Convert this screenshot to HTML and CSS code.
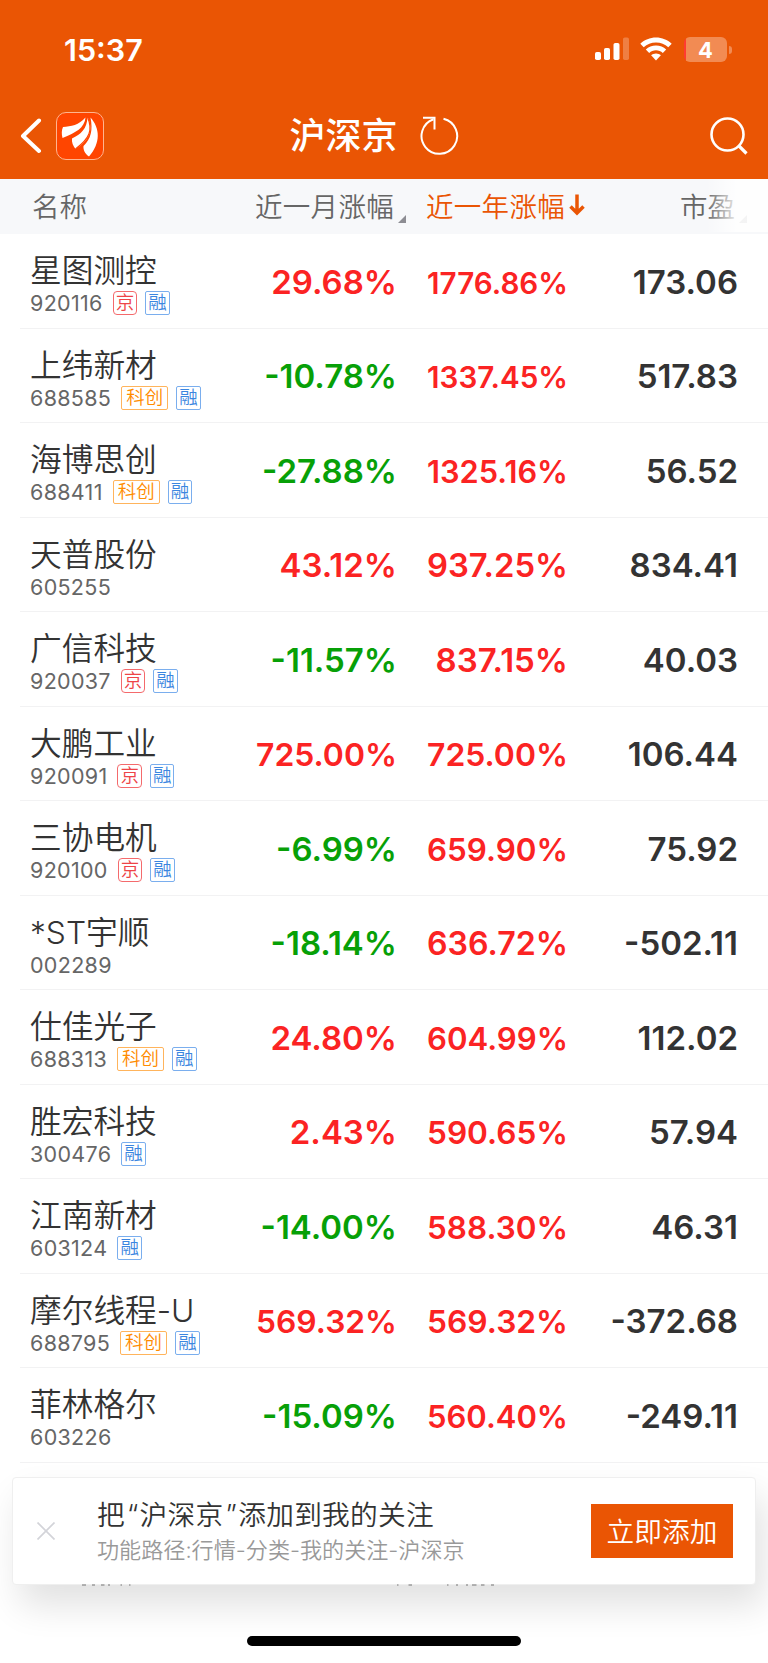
FILE: index.html
```html
<!DOCTYPE html>
<html lang="zh-CN">
<head>
  <meta charset="UTF-8" />
  <meta name="viewport" content="width=device-width, initial-scale=1.0"/>
  <title>沪深京</title>
  <link rel="stylesheet" href="styles.css">
</head>
<body>
  <header>
    <div class="status-bar">
      <span class="time">15:37</span>
      <div class="status-icons">
        <svg class="signal" width="34" height="24" viewBox="0 0 34 24" fill="#fff">
          <rect x="0" y="15" width="6" height="8" rx="1.8"/>
          <rect x="9" y="11" width="6" height="12" rx="1.8"/>
          <rect x="18.5" y="6" width="6" height="17" rx="1.8"/>
          <rect x="28" y="0.5" width="6" height="22.5" rx="1.8" opacity="0.25"/>
        </svg>
        <svg class="wifi" width="32" height="24" viewBox="0 0 32 24" fill="#fff">
          <path d="M16 0.5C22 0.5 27.500 2.800 31.700 6.700L28.300 10.300C25 7.200 20.700 5.400 16 5.400S7 7.200 3.700 10.300L0.300 6.700C4.500 2.800 10 0.500 16 0.500Z"/>
          <path d="M16 8.500C20 8.500 23.500 10 26.200 12.400L22.800 15.900C21 14.300 18.600 13.300 16 13.300S11 14.300 9.200 15.900L5.800 12.400C8.500 10 12 8.500 16 8.500Z"/>
          <path d="M16 16.500C17.900 16.500 19.600 17.200 20.900 18.300L16 23.500L11.100 18.300C12.400 17.200 14.100 16.500 16 16.500Z"/>
        </svg>
        <div class="battery"><span>4</span></div>
      </div>
    </div>
    <nav>
      <div class="nav-left">
        <svg width="22" height="36" viewBox="0 0 22 36" fill="none" stroke="#fff" stroke-width="4" stroke-linecap="round" stroke-linejoin="round">
          <path d="M19 2.500L3 18L19 33"/>
        </svg>
        <svg class="logo" width="48" height="48" viewBox="0 0 48 48">
          <rect x="0.500" y="0.500" width="47" height="47" rx="9.500" fill="#ff4500" stroke="#ffb48f"/>
          <g fill="#fff">
            <path d="M6.500 26C5.500 22 5.500 18 7 15C15 14.500 23 13 29.500 5.500C28.500 16 20 20.500 6.500 26Z"/>
            <path d="M19.500 37C17 34 15.500 30 16 26.500C25 22 31 17 31.500 5C39 19 31 30 19.500 37Z"/>
            <path d="M33 44.500C29 42 27 37.500 27.500 34C35 27 37 18 34.500 5.500C44 16 45 31 33 44.500Z"/>
            <path d="M31.500 5C37 18 34 26 19.500 37" fill="none" stroke="#ff4500" stroke-width="1.200"/>
          </g>
        </svg>
      </div>
      <div class="nav-title">
        <h1>沪深京</h1>
        <svg width="40" height="40" viewBox="0 0 40 40" fill="none" stroke="#fff" stroke-width="2">
          <path d="M24.500 2.700A17.800 17.800 0 1 1 14.500 3.200"/>
          <path d="M4 1.800H15.500V13.500"/>
        </svg>
      </div>
      <svg class="search" width="38" height="38" viewBox="0 0 38 38" fill="none" stroke="#fff" stroke-width="2.600">
        <circle cx="17.500" cy="17.500" r="16"/>
        <path d="M28.500 28.500L36.500 36.500" stroke-width="3.200"/>
      </svg>
    </nav>
  </header>

  <div class="table-head">
    <span class="col-name">名称</span>
    <span class="col-month">近一月涨幅<i class="corner"></i></span>
    <span class="col-year active">近一年涨幅<svg width="16" height="22" viewBox="0 0 16 22" fill="none" stroke="#ea5504" stroke-width="3.500"><path d="M8 0.500V19M1.500 12.500L8 19L14.500 12.500"/></svg></span>
    <span class="col-pe">市盈<i class="corner"></i></span>
  </div>

  <main id="stockList"></main>

  <div class="banner">
    <svg class="close" width="18" height="18" viewBox="0 0 18 18" stroke="#d3d4d9" stroke-width="1.700">
      <path d="M0.500 0.500L17.500 17.500M17.500 0.500L0.500 17.500"/>
    </svg>
    <div class="banner-text">
      <p class="banner-title">把<q>“</q>沪深京<q>”</q>添加到我的关注</p>
      <p class="banner-path">功能路径:行情-分类-我的关注-沪深京</p>
    </div>
    <button type="button">立即添加</button>
  </div>
  <!-- bottom edge of the tab labels under the banner -->
  <svg class="tab-edge" width="420" height="2" viewBox="0 0 420 2" stroke="#777" stroke-width="1.200">
    <path d="M0 1h4M10 1h3M19 1h3.500M26 1h2M38.500 1h1.500M47 1h1.500M315 1h1.500M326.500 1h3.500M365 1h1.500M374 1h2M384 1h2M390 1h4.500M399 1h3.500M409 1h3"/>
  </svg>
  <div class="home-indicator"></div>

  <script>
    const stocks = [
      ['星图测控', '920116', ['京', '融'], '29.68', '1776.86', '173.06'],
      ['上纬新材', '688585', ['科创', '融'], '-10.78', '1337.45', '517.83'],
      ['海博思创', '688411', ['科创', '融'], '-27.88', '1325.16', '56.52'],
      ['天普股份', '605255', [], '43.12', '937.25', '834.41'],
      ['广信科技', '920037', ['京', '融'], '-11.57', '837.15', '40.03'],
      ['大鹏工业', '920091', ['京', '融'], '725.00', '725.00', '106.44'],
      ['三协电机', '920100', ['京', '融'], '-6.99', '659.90', '75.92'],
      ['*ST宇顺', '002289', [], '-18.14', '636.72', '-502.11'],
      ['仕佳光子', '688313', ['科创', '融'], '24.80', '604.99', '112.02'],
      ['胜宏科技', '300476', ['融'], '2.43', '590.65', '57.94'],
      ['江南新材', '603124', ['融'], '-14.00', '588.30', '46.31'],
      ['摩尔线程-U', '688795', ['科创', '融'], '569.32', '569.32', '-372.68'],
      ['菲林格尔', '603226', [], '-15.09', '560.40', '-249.11']
    ];
    const tagClass = { '京': 'tag-bj', '科创': 'tag-kc', '融': 'tag-rz' };
    const list = document.getElementById('stockList');

    function color(value) {
      return value.startsWith('-') ? 'down' : 'up';
    }

    stocks.forEach(([name, code, tags, month, year, pe]) => {
      const row = document.createElement('div');
      row.className = 'row';
      row.innerHTML = `
        <div class="stock">
          <div class="stock-name">${name}</div>
          <div class="stock-code"><span>${code}</span>${tags.map(t => `<em class="tag ${tagClass[t]}">${t}</em>`).join('')}</div>
        </div>
        <span class="num month ${color(month)}"><b>${month}%</b></span>
        <span class="num year ${color(year)}"><b>${year}%</b></span>
        <span class="num pe">${pe}</span>`;
      list.appendChild(row);
    });

    // shrink long values so they stay inside the column
    document.querySelectorAll('.num b').forEach(el => {
      const width = el.getBoundingClientRect().width;
      if (width > 141) el.style.fontSize = (33 * 141 / width) + 'px';
    });
  </script>
</body>
</html>
```
FILE: styles.css
```css
* {
  box-sizing: border-box;
}

body {
  margin: 0;
  height: 1663px;
  overflow: hidden;
  position: relative;
  background: #fff;
  color: #333;
  font-family: Inter, "Noto Sans CJK SC", sans-serif;
}

header {
  height: 179px;
  background: #ea5504;
  color: #fff;
}

.status-bar {
  display: flex;
  justify-content: space-between;
  align-items: center;
  height: 98px;
  padding: 0 35px 0 64px;
}

.time {
  font-size: 30.5px;
  font-weight: 600;
}

.status-icons {
  display: flex;
  align-items: center;
}

.wifi {
  margin: 0 12px 0 11px;
}

.battery {
  position: relative;
  width: 43px;
  height: 25px;
  margin-right: 6px;
  border-radius: 6px;
  background: linear-gradient(to right, #ff3b30 2px, #f28b53 2px);
  font-size: 22px;
  font-weight: 700;
  line-height: 26px;
  text-align: center;
}

.battery::after {
  content: "";
  position: absolute;
  left: 45px;
  top: 9px;
  width: 3px;
  height: 8px;
  border-radius: 0 3px 3px 0;
  background: #f28b53;
}

nav {
  display: grid;
  grid-template-columns: 1fr auto 1fr;
  align-items: center;
  height: 76px;
  padding: 0 20px;
}

.nav-left {
  display: flex;
  align-items: center;
  gap: 14px;
}

.nav-title {
  display: flex;
  align-items: center;
  gap: 21px;
  padding-right: 20px;
}

h1 {
  margin: 0;
  font-size: 36px;
  line-height: 48px;
  font-weight: 500;
}

.search {
  justify-self: end;
}

.table-head {
  position: relative;
  display: flex;
  align-items: center;
  height: 55px;
  padding-bottom: 3px;
  background: #f7f8fa;
  color: #666;
  font-size: 27.5px;
  font-weight: 350;
}

.table-head::after {
  content: "";
  position: absolute;
  right: 0;
  top: 0;
  width: 62px;
  height: 53px;
  background: linear-gradient(to right, rgba(255,255,255,0), #fff 32px);
  opacity: 0.9;
}

.col-name {
  width: 255px;
  padding-left: 32px;
}

.col-month {
  display: flex;
  width: 171px;
  letter-spacing: 0.3px;
}

.col-year {
  display: flex;
  align-items: center;
  gap: 4px;
  width: 254px;
  letter-spacing: 0.3px;
}

.col-pe {
  display: flex;
}

.active {
  color: #ea5504;
}

.corner {
  align-self: flex-end;
  margin: 0 0 2px 4px;
  border-left: 8px solid transparent;
  border-bottom: 8px solid #8d8d93;
}

.row {
  display: flex;
  align-items: center;
  height: 94.5px;
  margin-left: 20px;
  padding-left: 10px;
  border-bottom: 1px solid #f2f2f3;
}

.stock {
  width: 190px;
  padding-top: 9px;
  white-space: nowrap;
}

.stock-name {
  font-size: 31.7px;
  line-height: 36px;
  font-weight: 350;
}

.stock-code {
  display: flex;
  align-items: center;
  gap: 8px;
  height: 28px;
  color: #666;
  font-size: 21.5px;
}

.stock-code span {
  margin-right: 2px;
  letter-spacing: 0.3px;
}

.tag {
  height: 24px;
  padding: 0 2px;
  border: 1px solid;
  border-radius: 2px;
  font-size: 18.5px;
  font-style: normal;
  font-weight: 350;
  line-height: 21px;
}

.tag-bj {
  border-radius: 4px;
  border-color: #f46a6c;
  color: #ee4447;
}

.tag-kc {
  padding: 0 4px;
  border-color: #ffb45c;
  color: #ff8c00;
}

.tag-rz {
  border-color: #7aaeee;
  color: #3b86e0;
}

.num {
  font-size: 33px;
  font-weight: 600;
  text-align: right;
  padding-top: 2px;
}

.num b {
  font-weight: 600;
}

.month {
  width: 177px;
}

.year {
  width: 171px;
}

.pe {
  width: 170px;
}

.up {
  color: #fb2323;
}

.down {
  color: #07a007;
}

.banner {
  position: absolute;
  left: 12px;
  top: 1477px;
  display: flex;
  align-items: center;
  width: 744px;
  height: 108px;
  padding: 0 22px 0 24px;
  border: 1px solid #efefef;
  border-radius: 4px;
  background: #fff;
  box-shadow: 8px 20px 36px rgba(0,0,0,0.12);
}

.banner-text {
  flex: 1;
  margin-left: 42px;
}

.banner p {
  margin: 0;
}

.banner-title {
  font-size: 27.7px;
  line-height: 38px;
  font-weight: 350;
  letter-spacing: 0.3px;
}

.banner-title q {
  margin: 0 1px 0 2px;
  quotes: none;
}

.banner-path {
  color: #999;
  font-size: 22.1px;
  line-height: 32px;
  font-weight: 350;
}

.banner button {
  width: 142px;
  height: 54px;
  padding: 0 0 3px;
  border: none;
  background: #ea5504;
  color: #fff;
  font: 350 27.7px "Noto Sans CJK SC", sans-serif;
}

.tab-edge {
  position: absolute;
  left: 82px;
  top: 1584px;
}

.home-indicator {
  position: absolute;
  left: 247px;
  top: 1636px;
  width: 274px;
  height: 10px;
  border-radius: 5px;
  background: #000;
}
```
